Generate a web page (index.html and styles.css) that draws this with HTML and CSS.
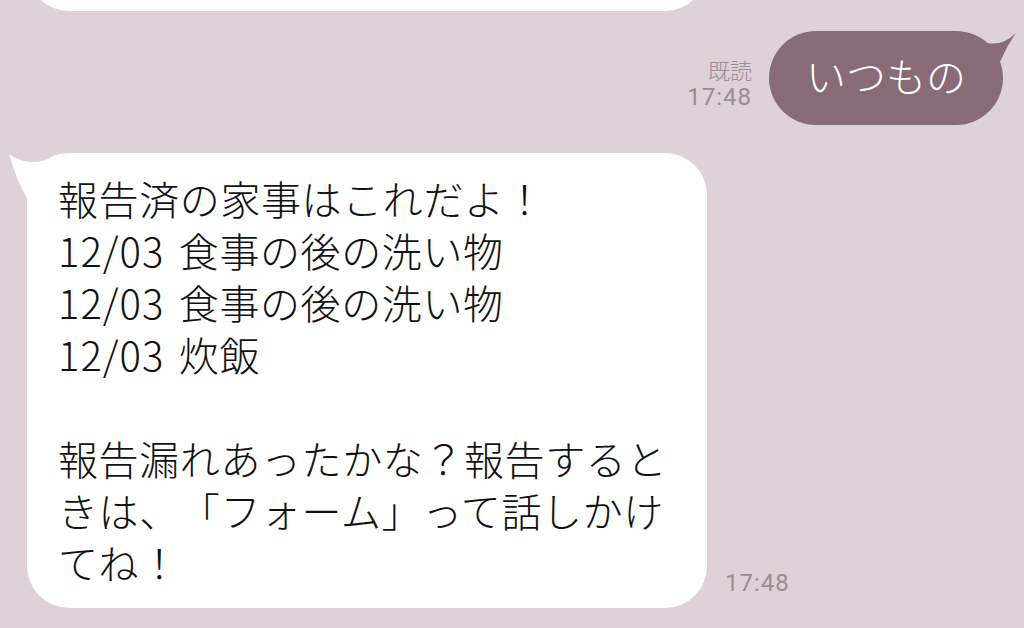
FILE: index.html
```html
<!DOCTYPE html>
<html lang="ja">
<head>
<meta charset="utf-8">
<link rel="stylesheet" href="styles.css">
</head>
<body>
<div class="chat">
  <div class="row row-top">
    <div class="bubble-top"></div>
  </div>
  <div class="row row-out">
    <div class="meta">
      <span class="read">既読</span>
      <span class="time">17:48</span>
    </div>
    <div class="bubble-out">
      <svg class="horn-out" width="45" height="40" viewBox="0 0 45 40"><path d="M13 16 Q29 19 42 6 Q34 17 26 35 L6 35 Z" fill="#876c77"/></svg>
      いつもの
    </div>
  </div>
  <div class="row row-in">
    <div class="bubble-in">
      <svg class="horn-in" width="40" height="50" viewBox="0 0 40 50"><path d="M2 3 Q19 15 39 9 L39 49 L21 49 Q10 31 2 3 Z" fill="#ffffff"/></svg>
      報告済の家事はこれだよ！<br><span class="date">12/03</span> 食事の後の洗い物<br><span class="date">12/03</span> 食事の後の洗い物<br><span class="date">12/03</span> 炊飯<br><br>報告漏れあったかな？報告するときは、「フォーム」って話しかけてね！
    </div>
    <span class="time time-in">17:48</span>
  </div>
</div>
</body>
</html>
```
FILE: styles.css
```css
html, body {
  margin: 0;
  padding: 0;
}
body {
  background: #dfd1d8;
  font-family: "Noto Sans CJK JP", "Noto Sans", sans-serif;
  width: 1024px;
  height: 628px;
  overflow: hidden;
}
.chat {
  display: flex;
  flex-direction: column;
}
.row {
  display: flex;
  align-items: flex-end;
}
.row-top {
  padding-left: 27px;
}
.bubble-top {
  width: 680px;
  height: 60px;
  margin-top: -49px;
  background: #ffffff;
  border-radius: 0 0 42px 42px;
}
.row-out {
  justify-content: flex-end;
  padding-right: 21px;
  margin-top: 20px;
  gap: 17px;
}
.meta {
  display: flex;
  flex-direction: column;
  align-items: flex-end;
  margin-bottom: 14px;
  color: #9a8d94;
}
.read {
  font-size: 22px;
  line-height: 28px;
  font-weight: 300;
}
.time {
  font-family: Roboto, "Liberation Sans", sans-serif;
  font-size: 24px;
  line-height: 28px;
  letter-spacing: 1px;
  color: #9a8d94;
}
.bubble-out {
  position: relative;
  background: #876c77;
  color: #ffffff;
  border-radius: 47px;
  padding: 18px 37px 24px;
  font-size: 40px;
  line-height: 52px;
  font-weight: 300;
}
.horn-out {
  position: absolute;
  right: -16px;
  top: -4px;
  display: block;
}
.row-in {
  padding-left: 27px;
  margin-top: 28px;
  gap: 18px;
}
.bubble-in {
  position: relative;
  width: 680px;
  box-sizing: border-box;
  background: #ffffff;
  border-radius: 42px;
  padding: 19px 36px 20px 31px;
  font-size: 40px;
  line-height: 52px;
  font-weight: 300;
  color: #111111;
  text-spacing-trim: space-all;
  letter-spacing: 0.6px;
  word-spacing: 5px;
}
.date {
  letter-spacing: 1px;
}
.horn-in {
  position: absolute;
  left: -20px;
  top: -2px;
  display: block;
}
.time-in {
  margin-bottom: 11px;
}
```
